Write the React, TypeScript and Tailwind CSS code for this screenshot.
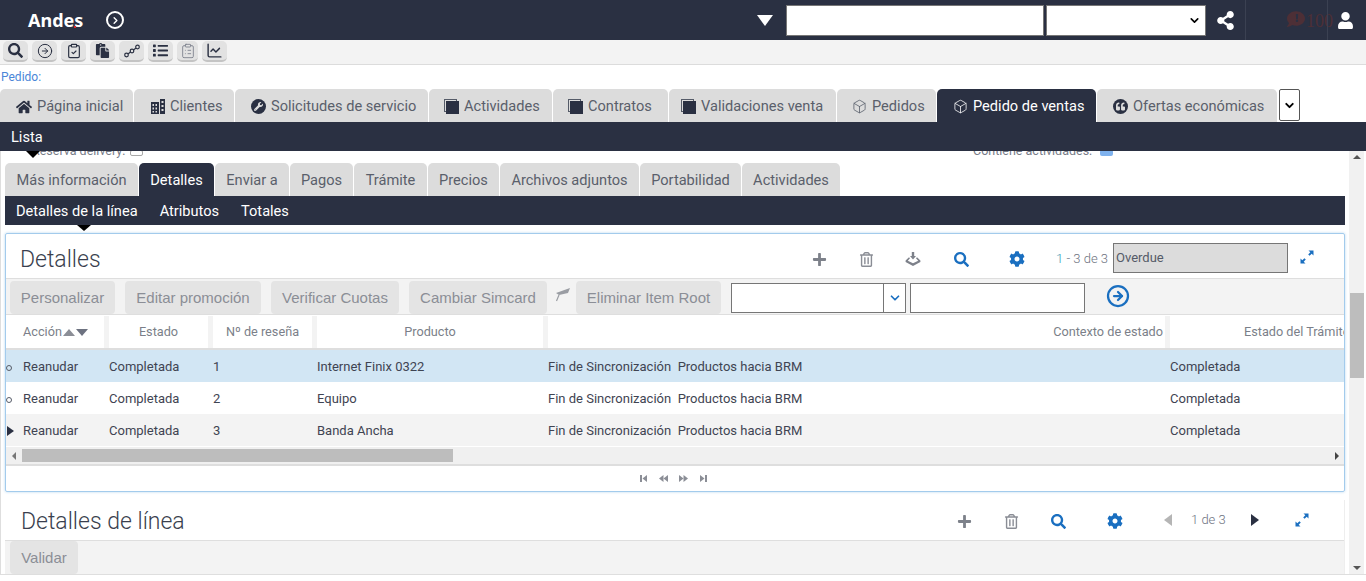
import { Box, ChevronDown, CircleArrowRight, ClipboardCheck, ClipboardList, ChartLine } from "lucide-react";
import { FaCog, FaExclamation, FaComment, FaHome, FaList, FaPaste, FaPlus, FaQuoteLeft, FaRegTrashAlt, FaSearch, FaShareAlt, FaUser, FaWrench } from "react-icons/fa";

const MAIN_TABS = [
  { label: "Página inicial", w: "w-[133px] pl-[16px]", icon: "home" },
  { label: "Clientes", w: "w-[100px] pl-[17px]", icon: "building" },
  { label: "Solicitudes de servicio", w: "w-[193px] pl-[16px]", icon: "wrench" },
  { label: "Actividades", w: "w-[123px] pl-[15px]", icon: "stack" },
  { label: "Contratos", w: "w-[115px] pl-[15px]", icon: "stack" },
  { label: "Validaciones venta", w: "w-[167px] pl-[12px]", icon: "stack" },
  { label: "Pedidos", w: "w-[99px] pl-[15px]", icon: "box" },
  { label: "Pedido de ventas", w: "w-[159px] pl-[16px]", icon: "box", active: true },
  { label: "Ofertas económicas", w: "w-[180px] pl-[16px]", icon: "quote" },
];

const SUB_TABS = [
  { label: "Más información", w: "w-[133px]" },
  { label: "Detalles", w: "w-[75px]", active: true },
  { label: "Enviar a", w: "w-[74px]" },
  { label: "Pagos", w: "w-[63px]" },
  { label: "Trámite", w: "w-[73px]" },
  { label: "Precios", w: "w-[71px]" },
  { label: "Archivos adjuntos", w: "w-[139px]" },
  { label: "Portabilidad", w: "w-[101px]" },
  { label: "Actividades", w: "w-[98px]" },
];

const ROWS = [
  { n: "1", product: "Internet Finix 0322", bg: "bg-[#d2e6f4]", marker: "o" },
  { n: "2", product: "Equipo", bg: "bg-white", marker: "o" },
  { n: "3", product: "Banda Ancha", bg: "bg-[#f3f3f3]", marker: "arrow" },
];

function StackIcon() {
  return (
    <span className="relative w-[15px] h-[15px] shrink-0">
      <span className="absolute left-0 top-0 w-[13px] h-[13px] border border-[#555b68]" />
      <span className="absolute left-[2px] top-[2px] w-[13px] h-[13px] bg-[#2a3042]" />
    </span>
  );
}

function BuildingIcon() {
  return (
    <svg width="14" height="15" viewBox="0 0 14 15" className="shrink-0 text-[#2a3042]" fill="currentColor">
      <path fillRule="evenodd" d="M0 3H8V15H0ZM1.5 5V7H3V5ZM4.5 5V7H6V5ZM1.5 8.5V10.5H3V8.5ZM4.5 8.5V10.5H6V8.5ZM1.5 12V13.5H3V12ZM4.5 12V13.5H6V12Z" />
      <path fillRule="evenodd" d="M9 0H14V15H9ZM10.5 2V4H12.5V2ZM10.5 6V8H12.5V6ZM10.5 10V12H12.5V10Z" />
    </svg>
  );
}

function TabIcon({ name, active }: { name: string; active?: boolean }) {
  if (name === "home") return <FaHome className="text-[#2a3042] text-[16px] shrink-0" />;
  if (name === "building") return <BuildingIcon />;
  if (name === "wrench")
    return (
      <span className="w-[15px] h-[15px] rounded-full bg-[#2a3042] flex items-center justify-center shrink-0">
        <FaWrench className="text-[#dcdcdc] text-[9px]" />
      </span>
    );
  if (name === "stack") return <StackIcon />;
  if (name === "box")
    return <Box size={15} strokeWidth={1.25} className={`shrink-0 ${active ? "text-white" : "text-[#555b68]"}`} />;
  return (
    <span className="w-[15px] h-[15px] rounded-full bg-[#2a3042] flex items-center justify-center shrink-0">
      <FaQuoteLeft className="text-[#dcdcdc] text-[9px]" />
    </span>
  );
}

function ToolButton({ children, w = "w-[25px]" }: { children: React.ReactNode; w?: string }) {
  return (
    <button
      type="button"
      className={`${w} h-[21px] rounded-[5px] bg-[#e2e2e2] border-b-2 border-[#c4c4c4] flex items-center justify-center text-[#2a3042]`}
    >
      {children}
    </button>
  );
}

function ActionButton({ children, w }: { children: React.ReactNode; w: string }) {
  return (
    <button
      type="button"
      className={`${w} h-[33px] pt-px rounded-[4px] bg-[#e4e4e4] text-[#8b8e96] text-[15px] font-['Liberation_Sans',sans-serif] shrink-0`}
    >
      {children}
    </button>
  );
}

function ExpandIcon() {
  return (
    <svg width="14" height="14" viewBox="0 0 14 14" className="text-[#1a6fc0]" fill="currentColor">
      <path d="M8.5 0.5H13.5V5.5L11.7 3.7L9.6 5.8L8.2 4.4L10.3 2.3Z" />
      <path d="M5.5 13.5H0.5V8.5L2.3 10.3L4.4 8.2L5.8 9.6L3.7 11.7Z" />
    </svg>
  );
}

function DownloadIcon() {
  return (
    <svg width="16" height="15" viewBox="0 0 16 15" className="text-[#7d818a]" fill="currentColor">
      <path d="M6.8 0H9.2V4H11L8 7.4L5 4H6.8Z" />
      <path d="M4 5.2L0.6 8.6V10L8 14L15.4 10V8.6L12 5.2L11 6.2L13.2 8.8L8 11.2L2.8 8.8L5 6.2Z" />
    </svg>
  );
}

function NodesIcon() {
  return (
    <svg width="16" height="14" viewBox="0 0 16 14" fill="none" stroke="currentColor" strokeWidth="1.2">
      <circle cx="2.5" cy="11" r="1.8" />
      <circle cx="8" cy="7" r="1.8" />
      <circle cx="13.5" cy="3" r="1.8" />
      <path d="M4 10L6.5 8M9.5 6L12 4" />
    </svg>
  );
}

function Pager({ dir }: { dir: "first" | "prev" | "next" | "last" }) {
  const flip = dir === "next" || dir === "last";
  return (
    <svg width="9" height="7" viewBox="0 0 9 7" fill="currentColor" className={flip ? "rotate-180" : ""}>
      {dir === "first" || dir === "last" ? (
        <>
          <rect x="1" y="0" width="2" height="7" />
          <path d="M8 0V7L3.5 3.5Z" />
        </>
      ) : (
        <>
          <path d="M4.5 0V7L0 3.5Z" />
          <path d="M9 0V7L4.5 3.5Z" />
        </>
      )}
    </svg>
  );
}

export default function App() {
  return (
    <div className="w-[1366px] h-[581px] overflow-hidden bg-white font-['Roboto',sans-serif] flex flex-col">
      {/* Cabecera */}
      <header className="h-[40px] bg-[#2a3042] flex items-center shrink-0 relative">
        <span className="ml-[28px] text-white text-[18px] font-bold font-['Noto_Sans',sans-serif] w-[73px] relative">
          Andes
          <span className="absolute left-[46px] top-[19px] w-[2px] h-[2px] bg-[#d8262c]" />
        </span>
        <span className="w-[18px] h-[18px] rounded-full border-2 border-white flex items-center justify-center ml-[5px]">
          <ChevronDown size={11} strokeWidth={3} className="text-white -rotate-90" />
        </span>
        <span className="ml-[633px] w-0 h-0 border-l-[8px] border-r-[8px] border-t-[11px] border-l-transparent border-r-transparent border-t-white" />
        <input className="ml-[13px] w-[258px] h-[31px] bg-white border border-[#767676]" aria-label="Buscar" />
        <div className="ml-[2px] w-[160px] h-[31px] bg-white border border-[#767676] flex items-center justify-end pr-[4px]">
          <ChevronDown size={13} strokeWidth={3} className="text-black" />
        </div>
        <FaShareAlt className="ml-[10px] text-white text-[19px]" />
        <span className="ml-[10px] w-px h-[40px] bg-[#3b4152]" />
        <span className="ml-[41px] relative w-[18px] h-[18px] -mt-[2px]">
          <FaComment className="text-[#4d2f36] text-[18px]" />
          <FaExclamation className="absolute left-[6px] top-[4px] text-[#2a3042] text-[8px]" />
        </span>
        <span className="text-[#4d2f36] text-[18px] font-['Liberation_Serif',serif] ml-[1px] mt-[3px]">100</span>
        <span className="absolute left-[1327px] top-0 w-px h-[40px] bg-[#3b4152]" />
        <FaUser className="ml-[4px] text-white text-[17px]" />
      </header>

      {/* Barra de herramientas */}
      <div className="h-[25px] bg-[#f3f3f3] border-b border-[#dcdcdc] flex items-start pt-[1px] pl-[3px] gap-[4px] shrink-0">
        <ToolButton><FaSearch className="text-[15px]" /></ToolButton>
        <ToolButton><CircleArrowRight size={16} strokeWidth={1.5} /></ToolButton>
        <ToolButton><ClipboardCheck size={16} strokeWidth={1.75} /></ToolButton>
        <ToolButton><FaPaste className="text-[15px]" /></ToolButton>
        <ToolButton><NodesIcon /></ToolButton>
        <ToolButton><FaList className="text-[15px]" /></ToolButton>
        <ToolButton w="w-[21px]"><ClipboardList size={16} strokeWidth={1.25} className="text-[#777c88]" /></ToolButton>
        <ToolButton><ChartLine size={17} strokeWidth={2} /></ToolButton>
      </div>

      <div className="h-[24px] pl-[1px] text-[12px] text-[#4a86d8] leading-[24px] shrink-0">Pedido:</div>

      {/* Pestañas principales */}
      <nav className="h-[33px] flex items-end shrink-0 gap-px">
        {MAIN_TABS.map((t) => (
          <div
            key={t.label}
            className={`${t.w} h-[33px] pt-[2px] rounded-t-[5px] flex items-center gap-[5px] text-[14.6px] whitespace-nowrap ${
              t.active ? "bg-[#2a3042] text-white" : "bg-[#dcdcdc] text-[#5a5f6b]"
            }`}
          >
            <TabIcon name={t.icon} active={t.active} />
            <span>{t.label}</span>
          </div>
        ))}
        <div className="ml-px w-[21px] h-[32px] self-start bg-white border border-[#555] rounded-[2px] flex items-center justify-center">
          <ChevronDown size={13} strokeWidth={3.5} className="text-black" />
        </div>
      </nav>

      <div className="h-[29px] bg-[#2a3042] text-white text-[14.6px] leading-[30px] pl-[11px] shrink-0">Lista</div>

      {/* Contenido */}
      <main className="h-[424px] flex border-b border-[#dedede] shrink-0 relative">
        <span className="absolute left-[26px] top-0 w-0 h-0 border-l-[7px] border-r-[7px] border-t-[7px] border-l-transparent border-r-transparent border-t-black z-10" />
        <div className="w-[1349px] overflow-hidden border-l border-[#dedede] pl-[4px] pr-[4px] flex flex-col">
          <div className="h-[12px] relative overflow-hidden text-[12.5px] text-[#777c88] shrink-0">
            <span className="absolute left-[27px] -top-[9px]">Reserva delivery:</span>
            <span className="absolute left-[125px] -top-[1px] w-[13px] h-[6px] border border-[#a8a8a8] rounded-[2px]" />
            <span className="absolute left-[968px] -top-[9px]">Contiene actividades:</span>
            <span className="absolute left-[1095px] -top-[1px] w-[13px] h-[6px] bg-[#7fb2ee] rounded-[2px]" />
          </div>

          <div className="flex gap-px h-[33px] shrink-0">
            {SUB_TABS.map((t) => (
              <div
                key={t.label}
                className={`${t.w} pt-[2px] rounded-t-[5px] text-[14.6px] flex items-center justify-center ${
                  t.active ? "bg-[#2a3042] text-white" : "bg-[#dcdcdc] text-[#5a5f6b]"
                }`}
              >
                {t.label}
              </div>
            ))}
          </div>

          <div className="h-[29px] pt-[2px] bg-[#2a3042] text-white text-[14.6px] flex items-center pl-[11px] gap-[22px] shrink-0 relative">
            <span>Detalles de la línea</span>
            <span>Atributos</span>
            <span>Totales</span>
            <span className="absolute left-[72px] top-full w-0 h-0 border-l-[7px] border-r-[7px] border-t-[6px] border-l-transparent border-r-transparent border-t-black" />
          </div>

          {/* Panel Detalles */}
          <section className="mt-[8px] h-[259px] shrink-0 border border-[#a3cbec] rounded-[2px] shadow-[0_0_3px_#b9d6ee] flex flex-col overflow-hidden">
            <div className="h-[44px] pt-[6px] flex items-center shrink-0">
              <h2 className="ml-[14px] w-[789px] pt-[2px] text-[23px] font-light text-[#3a3f4e]">Detalles</h2>
              <div className="w-[20px] flex justify-center"><FaPlus className="text-[#7d818a] text-[15px]" /></div>
              <div className="ml-[27px] w-[20px] flex justify-center"><FaRegTrashAlt className="text-[#8a8d95] text-[15px]" /></div>
              <div className="ml-[27px] w-[20px] flex justify-center"><DownloadIcon /></div>
              <div className="ml-[28px] w-[20px] flex justify-center"><FaSearch className="text-[#1a6fc0] text-[15px]" /></div>
              <div className="ml-[36px] w-[20px] flex justify-center"><FaCog className="text-[#1a6fc0] text-[16px]" /></div>
              <span className="ml-[29px] text-[13px] font-light text-[#6d7280] w-[52px] whitespace-nowrap">
                <span className="text-[#3a9ab8]">1</span> - 3 de 3
              </span>
              <div className="ml-[5px] -mt-[2px] w-[175px] h-[30px] bg-[#dcdcdc] border border-[#767676] text-[13px] text-[#555b68] leading-[28px] pl-[2px]">Overdue</div>
              <div className="ml-[12px] -mt-[4px]"><ExpandIcon /></div>
            </div>

            <div className="h-[37px] pt-[2px] bg-[#f3f3f3] border-t border-b border-[#dedede] flex items-center pl-[4px] shrink-0">
              <ActionButton w="w-[105px]">Personalizar</ActionButton>
              <ActionButton w="w-[136px] ml-[10px]">Editar promoción</ActionButton>
              <ActionButton w="w-[128px] ml-[10px]">Verificar Cuotas</ActionButton>
              <ActionButton w="w-[138px] ml-[10px]">Cambiar Simcard</ActionButton>
              <svg width="16" height="15" viewBox="0 0 16 15" className="ml-[8px] mb-[6px] text-[#9a9da3] shrink-0" fill="currentColor">
                <path d="M1 6L15 1L13 6L4 8Z" />
                <path d="M4 8L1.5 14" stroke="currentColor" strokeWidth="1.2" />
              </svg>
              <ActionButton w="w-[145px] ml-[5px]">Eliminar Item Root</ActionButton>
              <div className="ml-[10px] w-[175px] h-[30px] bg-white border border-[#767676] flex justify-end shrink-0">
                <div className="w-[22px] border-l border-[#767676] flex items-center justify-center">
                  <ChevronDown size={14} strokeWidth={3} className="text-[#1a6fc0]" />
                </div>
              </div>
              <input aria-label="Valor" className="ml-[4px] w-[175px] h-[30px] bg-white border border-[#767676] shrink-0" />
              <CircleArrowRight size={24} strokeWidth={2.25} className="ml-[21px] -mt-[4px] text-[#1a6fc0] shrink-0" />
            </div>

            {/* Tabla */}
            <div className="h-[35px] pt-px flex items-stretch text-[12.7px] text-[#7b7f89] border-b-2 border-[#dedede] shrink-0 overflow-hidden whitespace-nowrap">
              <div className="w-[98px] pl-[17px] flex items-center gap-px shrink-0">
                Acción
                <span className="w-0 h-0 border-l-[6px] border-r-[6px] border-b-[7px] border-l-transparent border-r-transparent border-b-[#8b8e96]" />
                <span className="w-0 h-0 border-l-[6px] border-r-[6px] border-t-[7px] border-l-transparent border-r-transparent border-t-[#6d7280]" />
              </div>
              <div className="w-[5px] bg-[#f3f3f3] shrink-0" />
              <div className="w-[99px] flex items-center justify-center shrink-0">Estado</div>
              <div className="w-[5px] bg-[#f3f3f3] shrink-0" />
              <div className="w-[99px] flex items-center justify-center shrink-0">Nº de reseña</div>
              <div className="w-[5px] bg-[#f3f3f3] shrink-0" />
              <div className="w-[226px] flex items-center justify-center shrink-0">Producto</div>
              <div className="w-[5px] bg-[#f3f3f3] shrink-0" />
              <div className="w-[617px] flex items-center justify-end pr-[2px] shrink-0">Contexto de estado</div>
              <div className="w-[5px] bg-[#f3f3f3] shrink-0" />
              <div className="flex-1 flex items-center pl-[74px]">Estado del Trámite</div>
            </div>

            {ROWS.map((r) => (
              <div key={r.n} className={`h-[32px] pt-px ${r.bg} flex items-center text-[13px] text-[#3f4452] whitespace-nowrap shrink-0 overflow-hidden`}>
                <div className="w-[17px] shrink-0 flex items-center">
                  {r.marker === "o" ? (
                    <span className="w-[6px] h-[6px] rounded-full border border-[#555b68] mt-[2px]" />
                  ) : (
                    <span className="w-0 h-0 border-t-[5px] border-b-[5px] border-l-[7px] border-t-transparent border-b-transparent border-l-[#2a3042] ml-px" />
                  )}
                </div>
                <div className="w-[86px] shrink-0">Reanudar</div>
                <div className="w-[104px] shrink-0">Completada</div>
                <div className="w-[104px] shrink-0">{r.n}</div>
                <div className="w-[231px] shrink-0">{r.product}</div>
                <div className="w-[622px] shrink-0">Fin de Sincronización&nbsp; Productos hacia BRM</div>
                <div>Completada</div>
              </div>
            ))}

            <div className="h-[20px] bg-[#f0f0f0] border-t border-white border-b-2 border-b-[#dedede] flex items-center shrink-0">
              <span className="ml-[6px] w-0 h-0 border-t-[4px] border-b-[4px] border-r-[4px] border-t-transparent border-b-transparent border-r-[#777]" />
              <div className="ml-[6px] w-[431px] h-[13px] bg-[#bdbdbd]" />
              <span className="ml-auto mr-[5px] w-0 h-0 border-t-[4px] border-b-[4px] border-l-[4px] border-t-transparent border-b-transparent border-l-[#444]" />
            </div>

            <div className="flex-1 flex items-center justify-center gap-[11px] text-[#8b8e96] pr-[4px]">
              <Pager dir="first" />
              <Pager dir="prev" />
              <Pager dir="next" />
              <Pager dir="last" />
            </div>
          </section>

          {/* Panel Detalles de línea */}
          <section className="mt-[8px] flex-1 flex flex-col min-h-0 border-r border-[#eeeeee]">
            <div className="h-[41px] pt-[2px] flex items-center border-b border-[#dedede] shrink-0">
              <h2 className="ml-[16px] w-[933px] pt-[2px] text-[23px] font-light text-[#3a3f4e]">Detalles de línea</h2>
              <div className="w-[20px] flex justify-center"><FaPlus className="text-[#7d818a] text-[15px]" /></div>
              <div className="ml-[27px] w-[20px] flex justify-center"><FaRegTrashAlt className="text-[#8a8d95] text-[15px]" /></div>
              <div className="ml-[27px] w-[20px] flex justify-center"><FaSearch className="text-[#1a6fc0] text-[15px]" /></div>
              <div className="ml-[37px] w-[20px] flex justify-center"><FaCog className="text-[#1a6fc0] text-[16px]" /></div>
              <span className="ml-[39px] -mt-[2px] w-0 h-0 border-t-[6px] border-b-[6px] border-r-[8px] border-t-transparent border-b-transparent border-r-[#b5b5b5]" />
              <span className="ml-[19px] -mt-[2px] text-[13px] font-light text-[#6d7280] w-[36px] whitespace-nowrap">1 de 3</span>
              <span className="ml-[24px] -mt-[2px] w-0 h-0 border-t-[6px] border-b-[6px] border-l-[8px] border-t-transparent border-b-transparent border-l-[#2a3042]" />
              <div className="ml-[36px] -mt-[2px]"><ExpandIcon /></div>
            </div>
            <div className="flex-1 bg-[#f3f3f3] pl-[5px] flex items-start">
              <ActionButton w="w-[68px]">Validar</ActionButton>
            </div>
          </section>
        </div>

        {/* Barra de desplazamiento */}
        <div className="w-[15px] bg-[#f1f1f1] relative shrink-0">
          <span className="absolute left-[4px] top-[4px] w-0 h-0 border-l-[4px] border-r-[4px] border-b-[4px] border-l-transparent border-r-transparent border-b-[#555]" />
          <div className="absolute left-px top-[142px] w-[14px] h-[85px] bg-[#bdbdbd]" />
          <span className="absolute left-[4px] bottom-[4px] w-0 h-0 border-l-[4px] border-r-[4px] border-t-[4px] border-l-transparent border-r-transparent border-t-[#555]" />
        </div>
      </main>
    </div>
  );
}
